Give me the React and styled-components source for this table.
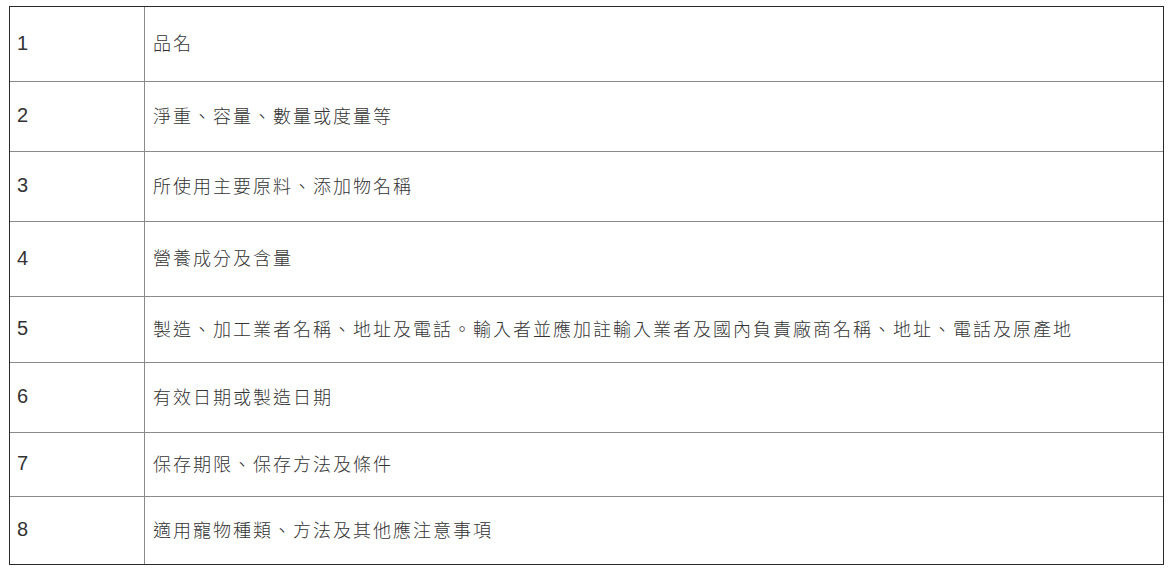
import React from "react";
import styled, { createGlobalStyle } from "styled-components";

const Global = createGlobalStyle`
  html, body { margin: 0; padding: 0; background: #fff; }
  body { font-family: "Liberation Sans", Arial, "Noto Sans CJK TC", sans-serif; }
`;

const Page = styled.div`
  padding: 6px 0 0 9px;
`;

const Table = styled.div`
  width: 1153px;
  border: 1px solid #2a2a2a;
  display: flex;
  flex-direction: column;
`;

const Row = styled.div`
  display: grid;
  grid-template-columns: 134px 1fr;
  height: ${(p) => p.$h}px;
  box-sizing: border-box;
  border-top: ${(p) => (p.$first ? "none" : "1px solid #8a8a8a")};
`;

const Cell = styled.div`
  display: flex;
  align-items: center;
  padding: 0 0 4px 8px;
  color: #333;
  font-size: 18px;
  font-weight: 300;
  letter-spacing: 2px;
  font-family: "Liberation Sans", Arial, "Noto Sans CJK TC", sans-serif;
  border-left: 1px solid #8a8a8a;
`;

const NumCell = styled.div`
  display: flex;
  align-items: center;
  padding: 0 0 2px 7px;
  color: #333;
  font-size: 20px;
  font-family: "Liberation Sans", Arial, sans-serif;
`;

const rows = [
  ["1", "品名", 74],
  ["2", "淨重、容量、數量或度量等", 70],
  ["3", "所使用主要原料、添加物名稱", 70],
  ["4", "營養成分及含量", 75],
  ["5", "製造、加工業者名稱、地址及電話。輸入者並應加註輸入業者及國內負責廠商名稱、地址、電話及原產地", 66],
  ["6", "有效日期或製造日期", 70],
  ["7", "保存期限、保存方法及條件", 64],
  ["8", "適用寵物種類、方法及其他應注意事項", 68],
];

export default function App() {
  return (
    <Page>
      <Global />
      <Table>
        {rows.map(([n, t, h], i) => (
          <Row key={n} $h={h} $first={i === 0}>
            <NumCell>{n}</NumCell>
            <Cell>{t}</Cell>
          </Row>
        ))}
      </Table>
    </Page>
  );
}
